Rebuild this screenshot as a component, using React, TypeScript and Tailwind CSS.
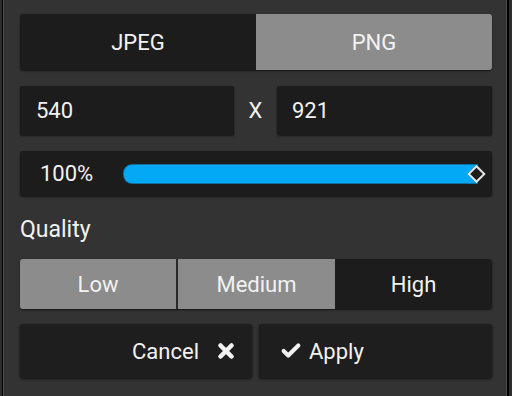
import { Check, X } from "lucide-react";

const font = { fontFamily: "Roboto, 'Noto Sans', sans-serif" };

const App = () => {
  return (
    <div className="w-[512px] h-[396px] bg-[#2e2e2e] pl-[2px] pr-[3px] text-[#f2f2f2]" style={font}>
      <div className="h-full border-l border-r-2 border-black">
        <div className="h-full bg-[#333333] border-x border-[#4c4c4c] pl-[16px] pr-[14px] pt-[14px] flex flex-col">
          {/* Format tabs */}
          <div className="flex h-[56px] rounded-[3px] overflow-hidden shadow-[0_1px_2px_rgba(0,0,0,0.6)] text-[22px]">
            <button className="flex-1 bg-[#1c1c1c] flex items-center justify-center">JPEG</button>
            <button className="flex-1 bg-[#8c8c8c] flex items-center justify-center">PNG</button>
          </div>

          {/* Size */}
          <div className="flex items-center mt-[16px] h-[49px] text-[22px]">
            <div className="w-[214px] h-full bg-[#1c1c1c] rounded-[2px] flex items-center pl-[16px] shadow-[0_1px_2px_rgba(0,0,0,0.6)]">540</div>
            <div className="w-[43px] text-center">X</div>
            <div className="flex-1 h-full bg-[#1c1c1c] rounded-[2px] flex items-center pl-[15px] shadow-[0_1px_2px_rgba(0,0,0,0.6)]">921</div>
          </div>

          {/* Scale slider */}
          <div className="mt-[16px] h-[45px] bg-[#1c1c1c] rounded-[3px] flex items-center shadow-[0_1px_2px_rgba(0,0,0,0.6)]">
            <span className="w-[104px] pl-[20px] text-[22px]">100%</span>
            <div className="relative flex-1 mr-[15px] h-[18px]">
              <div className="h-full bg-[#03a9f4] rounded-l-[8px] shadow-[0_0_0_1px_#0b6fa0]" />
              <div className="absolute right-[-6px] top-1/2 -translate-y-1/2 w-[13px] h-[13px] rotate-45 bg-[#1c1c1c] border-2 border-[#e6e6e6]" />
            </div>
          </div>

          {/* Quality */}
          <div className="mt-[20px] h-[28px] text-[23px] leading-[28px]">Quality</div>
          <div className="mt-[15px] flex h-[50px] rounded-[3px] overflow-hidden text-[22px] shadow-[0_1px_2px_rgba(0,0,0,0.6)]">
            <button className="w-[158px] bg-[#8c8c8c] flex items-center justify-center border-r-2 border-[#2a2a2a]">Low</button>
            <button className="w-[157px] bg-[#8c8c8c] flex items-center justify-center">Medium</button>
            <button className="flex-1 bg-[#1c1c1c] flex items-center justify-center">High</button>
          </div>

          {/* Actions */}
          <div className="mt-[15px] flex gap-[7px] h-[54px] text-[22px]">
            <button className="w-[232px] bg-[#1e1e1e] rounded-[3px] flex items-center justify-end pr-[15px] gap-[16px] shadow-[0_1px_3px_rgba(0,0,0,0.7)]">
              <span>Cancel</span>
              <X size={22} strokeWidth={5} />
            </button>
            <button className="flex-1 bg-[#1e1e1e] rounded-[3px] flex items-center pl-[21px] gap-[7px] shadow-[0_1px_3px_rgba(0,0,0,0.7)]">
              <Check size={22} strokeWidth={4.5} />
              <span>Apply</span>
            </button>
          </div>
        </div>
      </div>
    </div>
  );
};

export default App;
